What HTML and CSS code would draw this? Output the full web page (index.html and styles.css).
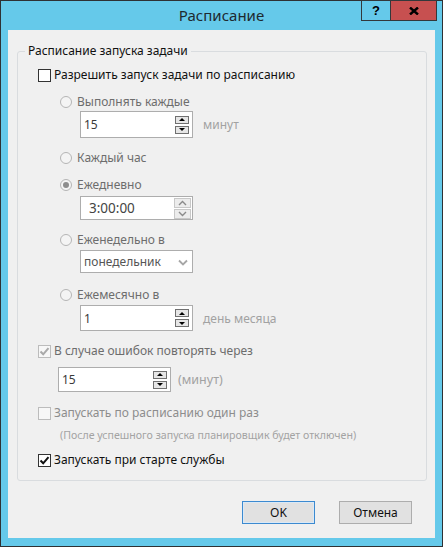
FILE: index.html
```html
<!DOCTYPE html>
<html lang="ru">
<head>
<meta charset="utf-8">
<title>Расписание</title>
<link rel="stylesheet" href="styles.css">
</head>
<body>
<div class="window">
  <div class="titlebar">
    <span class="title">Расписание</span>
    <div class="caption">
      <span class="cap help">?</span>
      <span class="cap close"><svg width="10" height="8" viewBox="0 0 10 8"><path d="M1 0.5 L9 7.5 M9 0.5 L1 7.5" stroke="#000" stroke-width="2.4" fill="none"/></svg></span>
    </div>
  </div>
  <div class="client">
    <fieldset class="group">
      <legend>Расписание запуска задачи</legend>

      <div class="row cbrow r-a">
        <span class="cb"></span><span class="lbl">Разрешить запуск задачи по расписанию</span>
      </div>

      <div class="row radrow r-b">
        <span class="radio"></span><span class="lbl dis">Выполнять каждые</span>
      </div>
      <div class="fieldrow f-1">
        <div class="edit h27">
          <span class="val">15</span>
          <span class="spin dark"><span class="sb"><i class="tri up"></i></span><span class="sb"><i class="tri down"></i></span></span>
        </div>
        <span class="unit">минут</span>
      </div>

      <div class="row radrow r-c">
        <span class="radio"></span><span class="lbl dis">Каждый час</span>
      </div>

      <div class="row radrow r-d">
        <span class="radio on"></span><span class="lbl dis">Ежедневно</span>
      </div>
      <div class="fieldrow f-2">
        <div class="edit h24">
          <span class="val time">3:00:00</span>
          <span class="spin light"><span class="sb"><svg width="9" height="6" viewBox="0 0 9 6"><path d="M1 5 L4.5 1.5 L8 5" stroke="#8a8a8a" stroke-width="1.4" fill="none"/></svg></span><span class="sb"><svg width="9" height="6" viewBox="0 0 9 6"><path d="M1 1 L4.5 4.5 L8 1" stroke="#8a8a8a" stroke-width="1.4" fill="none"/></svg></span></span>
        </div>
      </div>

      <div class="row radrow r-e">
        <span class="radio"></span><span class="lbl dis">Еженедельно в</span>
      </div>
      <div class="fieldrow f-3">
        <div class="edit select h23">
          <span class="val sel">понедельник</span>
          <svg class="chev" width="10" height="7" viewBox="0 0 10 7"><path d="M1 1.5 L5 5.5 L9 1.5" stroke="#a6a6a6" stroke-width="1.8" fill="none"/></svg>
        </div>
      </div>

      <div class="row radrow r-f">
        <span class="radio"></span><span class="lbl dis">Ежемесячно в</span>
      </div>
      <div class="fieldrow f-4">
        <div class="edit h26">
          <span class="val">1</span>
          <span class="spin dark"><span class="sb"><i class="tri up"></i></span><span class="sb"><i class="tri down"></i></span></span>
        </div>
        <span class="unit">день месяца</span>
      </div>

      <div class="row cbrow r-g">
        <span class="cb dis"><svg width="11" height="11" viewBox="0 0 11 11"><path d="M1.5 5.5 L4.2 8.3 L9.5 2.2" stroke="#a9a9a9" stroke-width="2" fill="none"/></svg></span><span class="lbl dis">В случае ошибок повторять через</span>
      </div>
      <div class="fieldrow f-5">
        <div class="edit h25">
          <span class="val">15</span>
          <span class="spin dark"><span class="sb"><i class="tri up"></i></span><span class="sb"><i class="tri down"></i></span></span>
        </div>
        <span class="unit paren">(минут)</span>
      </div>

      <div class="row cbrow r-h">
        <span class="cb dis"></span><span class="lbl dis2">Запускать по расписанию один раз</span>
      </div>
      <div class="row note">(После успешного запуска планировщик будет отключен)</div>

      <div class="row cbrow r-i">
        <span class="cb"><svg width="11" height="11" viewBox="0 0 11 11"><path d="M1.5 5.5 L4.2 8.3 L9.5 2.2" stroke="#111" stroke-width="2" fill="none"/></svg></span><span class="lbl">Запускать при старте службы</span>
      </div>
    </fieldset>

    <div class="buttons">
      <button class="btn default">OK</button>
      <button class="btn">Отмена</button>
    </div>
  </div>
</div>
</body>
</html>
```

FILE: styles.css
```css
* { box-sizing: border-box; }
html, body { margin: 0; padding: 0; }
body {
  font-family: "Noto Sans", "Segoe UI", sans-serif;
  font-size: 12px;
  color: #1a1a1a;
  background: #65c9ea;
}
.window {
  position: relative;
  width: 443px;
  height: 547px;
  border: 1px solid #2e3134;
  background: #65c9ea;
  display: flex;
  flex-direction: column;
}
.titlebar {
  height: 29px;
  display: flex;
  align-items: center;
  justify-content: center;
  flex: none;
}
.title {
  font-size: 15px;
  color: #1e2a30;
  margin-top: -2px;
}
.caption {
  position: absolute;
  top: -1px;
  right: 5px;
  display: flex;
  height: 21px;
}
.cap {
  display: flex;
  align-items: center;
  justify-content: center;
  height: 21px;
  border: 1px solid #33383b;
}
.help {
  width: 29px;
  border-right: none;
  background: #65c9ea;
  font-weight: bold;
  font-size: 13px;
  color: #000;
  font-family: "Liberation Sans", Arial, sans-serif;
}
.close {
  width: 47px;
  background: #c75050;
}
.client {
  flex: 1;
  margin: 0 7px 8px 7px;
  background: #f0f0f0;
  display: flex;
  flex-direction: column;
}
.group {
  margin: 13px 8px 0 9px;
  padding: 0 0 12px 0;
  border: 1px solid #d9dcdf;
  border-radius: 3px;
  min-width: 0;
}
.group legend {
  margin-left: 7px;
  padding: 0 3px;
  line-height: 16px;
  color: #111;
}
.row {
  display: flex;
  align-items: center;
  height: 16px;
  line-height: 16px;
  white-space: nowrap;
}
.cbrow { padding-left: 20px; }
.radrow { padding-left: 42px; }
.cb {
  width: 13px;
  height: 13px;
  border: 1px solid #333;
  background: #fff;
  margin-right: 3px;
  display: flex;
  align-items: center;
  justify-content: center;
  flex: none;
}
.cb.dis { border-color: #bcbcbc; background: #f7f7f7; }
.radio {
  width: 12px;
  height: 12px;
  border: 1px solid #b5b5b5;
  border-radius: 50%;
  background: #f4f4f4;
  margin-right: 5px;
  flex: none;
  display: flex;
  align-items: center;
  justify-content: center;
}
.radio.on::after {
  content: "";
  width: 6px;
  height: 6px;
  border-radius: 50%;
  background: #8d8d8d;
}
.lbl { color: #111; }
.lbl.dis { color: #6d6d6d; }
.lbl.dis2 { color: #8d8d8d; }

.r-a { margin-top: 8px; }
.r-b { margin-top: 11px; }
.f-1 { margin-top: 1px; }
.r-c { margin-top: 12px; }
.r-d { margin-top: 11px; }
.f-2 { margin-top: 3px; }
.r-e { margin-top: 12px; }
.f-3 { margin-top: 2px; }
.r-f { margin-top: 14px; }
.f-4 { margin-top: 2px; }
.r-g { margin-top: 12px; }
.f-5 { margin-top: 8px; padding-left: 40px !important; }
.r-h { margin-top: 13px; }
.note {
  margin-top: 6px;
  padding-left: 42px;
  font-size: 10.6px;
  color: #a3a3a3;
}
.r-i { margin-top: 9px; }

.fieldrow {
  display: flex;
  align-items: center;
  padding-left: 62px;
}
.edit {
  width: 113px;
  border: 1px solid #adadad;
  background: #fff;
  display: flex;
  align-items: center;
  justify-content: space-between;
  padding-left: 3px;
  padding-right: 2px;
  flex: none;
}
.h23 { height: 23px; }
.h24 { height: 24px; }
.h25 { height: 25px; }
.h26 { height: 26px; }
.h27 { height: 27px; }
.val { color: #3a3a3a; }
.val.time { font-size: 13.5px; padding-left: 5px; color: #444; }
.val.sel { color: #555; }
.unit {
  margin-left: 10px;
  color: #a2a2a2;
}
.unit.paren { margin-left: 7px; font-size: 12.5px; }
.spin {
  display: flex;
  flex-direction: column;
}
.spin.dark { gap: 2px; padding-right: 1px; }
.spin.dark .sb {
  width: 14px;
  height: 8px;
  border: 1px solid #707070;
  background: #e6e6e6;
  display: flex;
  align-items: center;
  justify-content: center;
}
.tri {
  width: 0;
  height: 0;
  border-left: 3px solid transparent;
  border-right: 3px solid transparent;
}
.tri.up { border-bottom: 3px solid #000; }
.tri.down { border-top: 3px solid #000; }
.spin.light { gap: 1px; margin-right: -1px; }
.spin.light .sb {
  width: 17px;
  height: 10px;
  border: 1px solid #c8c8c8;
  background: #ececec;
  display: flex;
  align-items: center;
  justify-content: center;
}
.select { padding-right: 4px; }
.chev { margin-top: 1px; }

.buttons {
  display: flex;
  justify-content: flex-end;
  gap: 24px;
  margin: 20px 23px 0 0;
}
.btn {
  width: 73px;
  height: 23px;
  border: 1px solid #adadad;
  background: #e1e1e1;
  font-family: "Noto Sans", "Segoe UI", sans-serif;
  font-size: 12px;
  font-weight: normal;
  color: #111;
  padding: 0;
  line-height: 20px;
}
.btn.default {
  border-color: #3c8ad0;
  box-shadow: inset 0 0 0 1px #dbe9f6;
}
```
